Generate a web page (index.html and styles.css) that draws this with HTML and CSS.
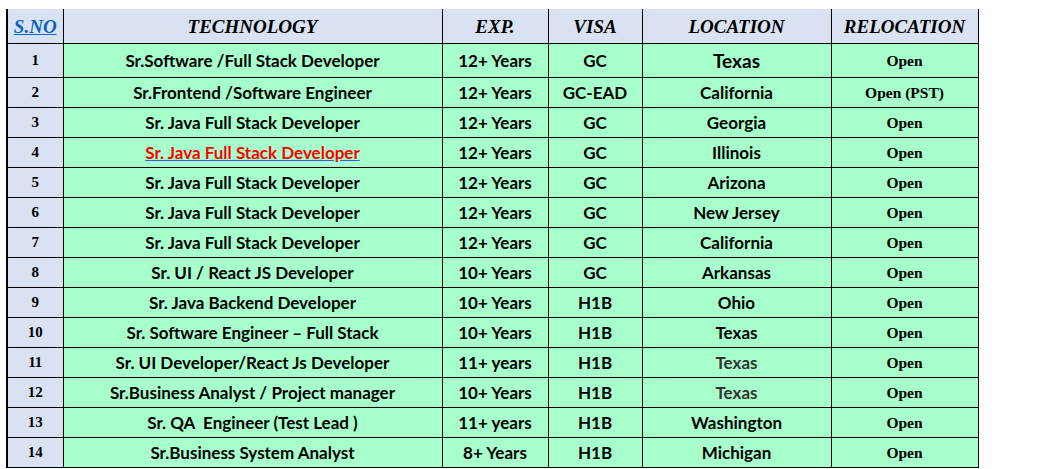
FILE: index.html
```html
<!DOCTYPE html>
<html>
<head>
<meta charset="utf-8">
<link rel="stylesheet" href="styles.css">
</head>
<body>
<table class="jobs">
  <colgroup>
    <col class="c-no"><col class="c-tech"><col class="c-exp"><col class="c-visa"><col class="c-loc"><col class="c-rel">
  </colgroup>
  <thead>
    <tr class="head">
      <th class="sno-h"><span class="link">S.NO</span></th>
      <th>TECHNOLOGY</th>
      <th>EXP.</th>
      <th>VISA</th>
      <th>LOCATION</th>
      <th>RELOCATION</th>
    </tr>
  </thead>
  <tbody>
    <tr class="r-first"><td class="no">1</td><td>Sr.Software /Full Stack Developer</td><td>12+ Years</td><td>GC</td><td class="big">Texas</td><td class="rel">Open</td></tr>
    <tr class="r-second"><td class="no">2</td><td>Sr.Frontend /Software Engineer</td><td>12+ Years</td><td>GC-EAD</td><td>California</td><td class="rel">Open (PST)</td></tr>
    <tr><td class="no">3</td><td>Sr. Java Full Stack Developer</td><td>12+ Years</td><td>GC</td><td>Georgia</td><td class="rel">Open</td></tr>
    <tr><td class="no">4</td><td><span class="red">Sr. Java Full Stack Developer</span></td><td>12+ Years</td><td>GC</td><td>Illinois</td><td class="rel">Open</td></tr>
    <tr><td class="no">5</td><td>Sr. Java Full Stack Developer</td><td>12+ Years</td><td>GC</td><td>Arizona</td><td class="rel">Open</td></tr>
    <tr><td class="no">6</td><td>Sr. Java Full Stack Developer</td><td>12+ Years</td><td>GC</td><td>New Jersey</td><td class="rel">Open</td></tr>
    <tr><td class="no">7</td><td>Sr. Java Full Stack Developer</td><td>12+ Years</td><td>GC</td><td>California</td><td class="rel">Open</td></tr>
    <tr><td class="no">8</td><td>Sr. UI / React JS Developer</td><td>10+ Years</td><td>GC</td><td>Arkansas</td><td class="rel">Open</td></tr>
    <tr><td class="no">9</td><td>Sr. Java Backend Developer</td><td>10+ Years</td><td>H1B</td><td>Ohio</td><td class="rel">Open</td></tr>
    <tr><td class="no">10</td><td>Sr. Software Engineer – Full Stack</td><td>10+ Years</td><td>H1B</td><td>Texas</td><td class="rel">Open</td></tr>
    <tr><td class="no">11</td><td>Sr. UI Developer/React Js Developer</td><td>11+ years</td><td>H1B</td><td class="grey">Texas</td><td class="rel">Open</td></tr>
    <tr><td class="no">12</td><td>Sr.Business Analyst / Project manager</td><td>10+ Years</td><td>H1B</td><td class="grey">Texas</td><td class="rel">Open</td></tr>
    <tr><td class="no">13</td><td>Sr. QA&nbsp; Engineer (Test Lead )</td><td>11+ years</td><td>H1B</td><td>Washington</td><td class="rel">Open</td></tr>
    <tr><td class="no">14</td><td>Sr.Business System Analyst</td><td>8+ Years</td><td>H1B</td><td>Michigan</td><td class="rel">Open</td></tr>
  </tbody>
</table>
</body>
</html>
```
FILE: styles.css
```css
html, body {
  margin: 0;
  padding: 0;
  background: #ffffff;
}
body {
  padding: 9px 0 0 6px;
}
.jobs {
  border-collapse: collapse;
  table-layout: fixed;
  width: 971px;
  font-family: "Lato", "Liberation Sans", sans-serif;
  color: #000;
}
.c-no { width: 56px; }
.c-tech { width: 379px; }
.c-exp { width: 106px; }
.c-visa { width: 94px; }
.c-loc { width: 189px; }
.c-rel { width: 147px; }

.jobs th, .jobs td {
  border: 1px solid #000;
  padding: 0;
  text-align: center;
  vertical-align: middle;
  overflow: hidden;
  white-space: nowrap;
}
.jobs th:first-child, .jobs td:first-child {
  border-left: 2px solid #000;
}
.jobs thead th {
  border-top: none;
  height: 33px;
  background: #d9e2f3;
  font-family: "Liberation Serif", serif;
  font-style: italic;
  font-weight: bold;
  font-size: 19px;
  padding-top: 1px;
}
.link {
  color: #0563c1;
  text-decoration: underline;
}
.jobs td {
  height: 29px;
  background: #a7ffcb;
  font-weight: bold;
  font-size: 17px;
}
.jobs tr.r-first td { height: 33px; }
.jobs td.no {
  background: #d9e2f3;
  font-family: "Liberation Serif", serif;
  font-size: 15px;
}
.jobs td.rel {
  font-family: "Liberation Serif", serif;
  font-size: 15.5px;
}
.jobs td.big { font-size: 19px; }
.jobs td.grey { color: #333333; }
.red {
  color: #ff0000;
  text-decoration: underline;
  text-decoration-color: #2f5ee0;
}
```
